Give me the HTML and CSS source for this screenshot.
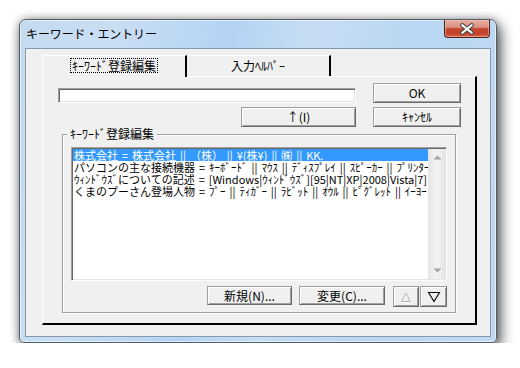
FILE: index.html
```html
<!DOCTYPE html>
<html lang="ja">
<head>
<meta charset="utf-8">
<title>キーワード・エントリー</title>
<link rel="stylesheet" href="styles.css">
</head>
<body>
<div class="window">
  <div class="titlebar">
    <span class="title">キーワード・エントリー</span>
    <div class="close">
      <svg width="46" height="18" viewBox="0 0 46 18">
        <path d="M18 5 L28 13 M28 5 L18 13" stroke="#3a3a3a" stroke-width="4.2" stroke-linecap="round" fill="none"/>
        <path d="M18 5 L28 13 M28 5 L18 13" stroke="#ffffff" stroke-width="2.2" stroke-linecap="round" fill="none"/>
      </svg>
    </div>
  </div>
  <div class="client">
    <div class="tabctl">
      <div class="tabs">
        <div class="tab tab-first active"><span class="focus">ｷｰﾜｰﾄﾞ登録編集</span></div>
        <div class="tab tab-second"><span class="label">入力ﾍﾙﾊﾟｰ</span></div>
      </div>
      <div class="panel">
        <div class="row-top">
          <div class="textbox"></div>
          <button class="btn btn-main">OK</button>
        </div>
        <div class="row-second">
          <button class="btn btn-up">↑(I)</button>
          <button class="btn btn-main">ｷｬﾝｾﾙ</button>
        </div>
        <fieldset class="group">
          <legend class="group-label">ｷｰﾜｰﾄﾞ登録編集</legend>
          <div class="listbox">
            <div class="rows">
              <div class="row sel">株式会社 = 株式会社 || （株） || ¥(株¥) || ㈱ || KK.</div>
              <div class="row">パソコンの主な接続機器 = ｷｰﾎﾞｰﾄﾞ || ﾏｳｽ || ﾃﾞｨｽﾌﾟﾚｲ || ｽﾋﾟｰｶｰ || ﾌﾟﾘﾝﾀｰ</div>
              <div class="row">ｳｨﾝﾄﾞｳｽﾞについての記述 = [Windows|ｳｨﾝﾄﾞｳｽﾞ][95|NT|XP|2008|Vista|7]</div>
              <div class="row">くまのプーさん登場人物 = ﾌﾟｰ || ﾃｨｶﾞｰ || ﾗﾋﾞｯﾄ || ｵｳﾙ || ﾋﾟｸﾞﾚｯﾄ || ｲｰﾖｰ</div>
            </div>
            <div class="vscroll">
              <div class="sarrow">
                <svg width="9" height="5" viewBox="0 0 9 5"><path d="M0.5 4.5 L4.5 0.5 L8.5 4.5 Z" fill="#a3a3a3"/></svg>
              </div>
              <div class="sarrow">
                <svg width="9" height="5" viewBox="0 0 9 5"><path d="M0.5 0.5 L4.5 4.5 L8.5 0.5 Z" fill="#a3a3a3"/></svg>
              </div>
            </div>
          </div>
          <div class="btnrow">
            <button class="btn btn-new">新規(N)...</button>
            <button class="btn btn-edit">変更(C)...</button>
            <div class="updown">
              <button class="btn btn-arrow">
                <svg width="14" height="12" viewBox="0 0 14 12"><path d="M2.5 10.5 L7 2 L11.5 10.5 Z" fill="none" stroke="#ffffff" stroke-width="1" transform="translate(1,1)"/><path d="M2.5 10.5 L7 2 L11.5 10.5 Z" fill="none" stroke="#b4b4b4" stroke-width="1"/></svg>
              </button>
              <button class="btn btn-arrow btn-arrow-down">
                <svg width="14" height="12" viewBox="0 0 14 12"><path d="M1.5 1.5 L12.5 1.5 L7 10.5 Z" fill="none" stroke="#000000" stroke-width="1.1"/></svg>
              </button>
            </div>
          </div>
        </fieldset>
      </div>
    </div>
  </div>
</div>
</body>
</html>
```
FILE: styles.css
```css
html, body {
  margin: 0;
  padding: 0;
  background: #ffffff;
}

body {
  font-family: "Noto Sans CJK JP", "Noto Sans", sans-serif;
  color: #000;
}

.window {
  box-sizing: border-box;
  width: 478px;
  height: 324px;
  margin: 19px 0 0 19px;
  border: 1px solid #4f5d6b;
  border-radius: 7px 7px 5px 5px;
  background:
    linear-gradient(100deg, #c4daef 0%, #c9def3 18%, #b3d3f4 40%, #c7ddf3 55%, #b9d6f3 75%, #c1daf2 100%);
  box-shadow:
    inset 0 0 0 1px rgba(255, 255, 255, 0.55),
    4px 6px 14px rgba(0, 0, 0, 0.6),
    0 0 8px rgba(0, 0, 0, 0.35);
  padding: 0 5px 5px;
  display: flex;
  flex-direction: column;
}

.titlebar {
  height: 28px;
  display: flex;
  align-items: flex-start;
  justify-content: space-between;
  flex: none;
}

.title {
  margin: 6px 0 0 1px;
  font-size: 12px;
  line-height: 16px;
  color: #000;
  letter-spacing: -0.1px;
}

.close {
  box-sizing: border-box;
  width: 46px;
  height: 18px;
  margin-right: 1px;
  border: 1px solid #4a2620;
  border-top: none;
  border-radius: 0 0 4px 4px;
  background: linear-gradient(180deg, #e8aca1 0%, #db9282 42%, #c4462c 52%, #c2402a 78%, #dc6446 100%);
  box-shadow: inset 0 0 0 1px rgba(255, 210, 200, 0.45);
  display: flex;
  align-items: center;
  justify-content: center;
}

.close svg {
  display: block;
}

.client {
  flex: 1;
  box-sizing: border-box;
  background: #f0f0f0;
  border: 1px solid #8799ac;
  padding: 6px 13px 11px 16px;
  display: flex;
  flex-direction: column;
}

.tabctl {
  flex: 1;
  display: flex;
  flex-direction: column;
}

.tabs {
  display: flex;
  height: 21px;
  flex: none;
}

.tab {
  box-sizing: border-box;
  height: 21px;
  border-top: 1px solid #ffffff;
  border-right: 2px solid #000000;
  font-size: 12px;
  display: flex;
  justify-content: center;
  padding-top: 2px;
}

.tab-first {
  width: 145px;
  border-left: 1px solid #ffffff;
  border-top-left-radius: 2px;
}

.tab-second {
  width: 144px;
}

.tab.active {
  position: relative;
  z-index: 1;
  height: 22px;
  margin-bottom: -1px;
  background: #f0f0f0;
}

.focus {
  display: inline-block;
  border: 1px dotted #000;
  padding: 0 1px;
  line-height: 13px;
  height: 13px;
}

.label {
  display: inline-block;
  padding-top: 1px;
  line-height: 13px;
}

.panel {
  flex: 1;
  box-sizing: border-box;
  border-left: 1px solid #ffffff;
  border-top: 1px solid #ffffff;
  border-right: 2px solid #000000;
  border-bottom: 2px solid #000000;
  padding: 6px 14px 0 15px;
  display: flex;
  flex-direction: column;
}

.row-top {
  display: flex;
  align-items: flex-end;
  gap: 17px;
}

.textbox {
  box-sizing: border-box;
  width: 298px;
  height: 15px;
  background: #ffffff;
  border: 1px solid;
  border-color: #a0a0a0 #ffffff #ffffff #a0a0a0;
  box-shadow: inset 1px 1px 0 #696969, inset -1px -1px 0 #e3e3e3;
}

.btn {
  box-sizing: border-box;
  height: 20px;
  padding: 0;
  margin: 0;
  font-family: "Noto Sans CJK JP", "Noto Sans", sans-serif;
  font-size: 12px;
  line-height: 16px;
  color: #000;
  background: #f0f0f0;
  border: 1px solid;
  border-color: #a0a0a0 #696969 #696969 #a0a0a0;
  box-shadow: inset 1px 1px 0 #ffffff, inset -1px -1px 0 #a0a0a0;
  display: flex;
  align-items: center;
  justify-content: center;
}

.btn-main {
  width: 88px;
}

.row-second {
  margin-top: 4px;
  display: flex;
  justify-content: flex-end;
  gap: 17px;
}

.btn-up {
  width: 115px;
}

.group {
  margin: 0 5px 0 4px;
  padding: 6px 8px 5px;
  min-width: 0;
  border: 1px solid #a0a0a0;
  box-shadow: inset 1px 1px 0 #ffffff, 1px 1px 0 #ffffff;
}

.group-label {
  margin-left: -4px;
  padding: 0 3px;
  font-size: 12px;
  line-height: 14px;
  background: #f0f0f0;
}

.listbox {
  box-sizing: border-box;
  height: 134px;
  display: flex;
  background: #ffffff;
  border: 1px solid;
  border-color: #a0a0a0 #ffffff #ffffff #a0a0a0;
  box-shadow: inset 1px 1px 0 #696969, inset -1px -1px 0 #e3e3e3;
  padding: 1px 1px 1px 1px;
}

.rows {
  flex: 1;
  min-width: 0;
  overflow: hidden;
}

.row {
  height: 12px;
  line-height: 12px;
  font-size: 11px;
  white-space: nowrap;
  padding-left: 1px;
  word-spacing: 1.5px;
  color: #000;
}

.row.sel {
  background: #3399ff;
  color: #ffffff;
}

.vscroll {
  width: 17px;
  flex: none;
  box-sizing: border-box;
  border-left: 1px solid #e6e6e6;
  background: linear-gradient(90deg, #e6e6e6 0%, #f2f2f2 40%, #f2f2f2 60%, #e4e4e4 100%);
  display: flex;
  flex-direction: column;
  justify-content: space-between;
}

.sarrow {
  height: 17px;
  display: flex;
  align-items: center;
  justify-content: center;
}

.sarrow svg {
  display: block;
}

.btnrow {
  margin-top: 5px;
  display: flex;
  justify-content: flex-end;
  align-items: flex-start;
}

.btn-new {
  width: 85px;
  height: 19px;
}

.btn-edit {
  width: 86px;
  height: 19px;
  margin-left: 7px;
}

.updown {
  display: flex;
  gap: 1px;
  margin-left: 8px;
}

.btn-arrow {
  width: 26px;
  height: 21px;
}

.btn-arrow-down {
  width: 27px;
}

.btn-arrow svg {
  display: block;
}
```
